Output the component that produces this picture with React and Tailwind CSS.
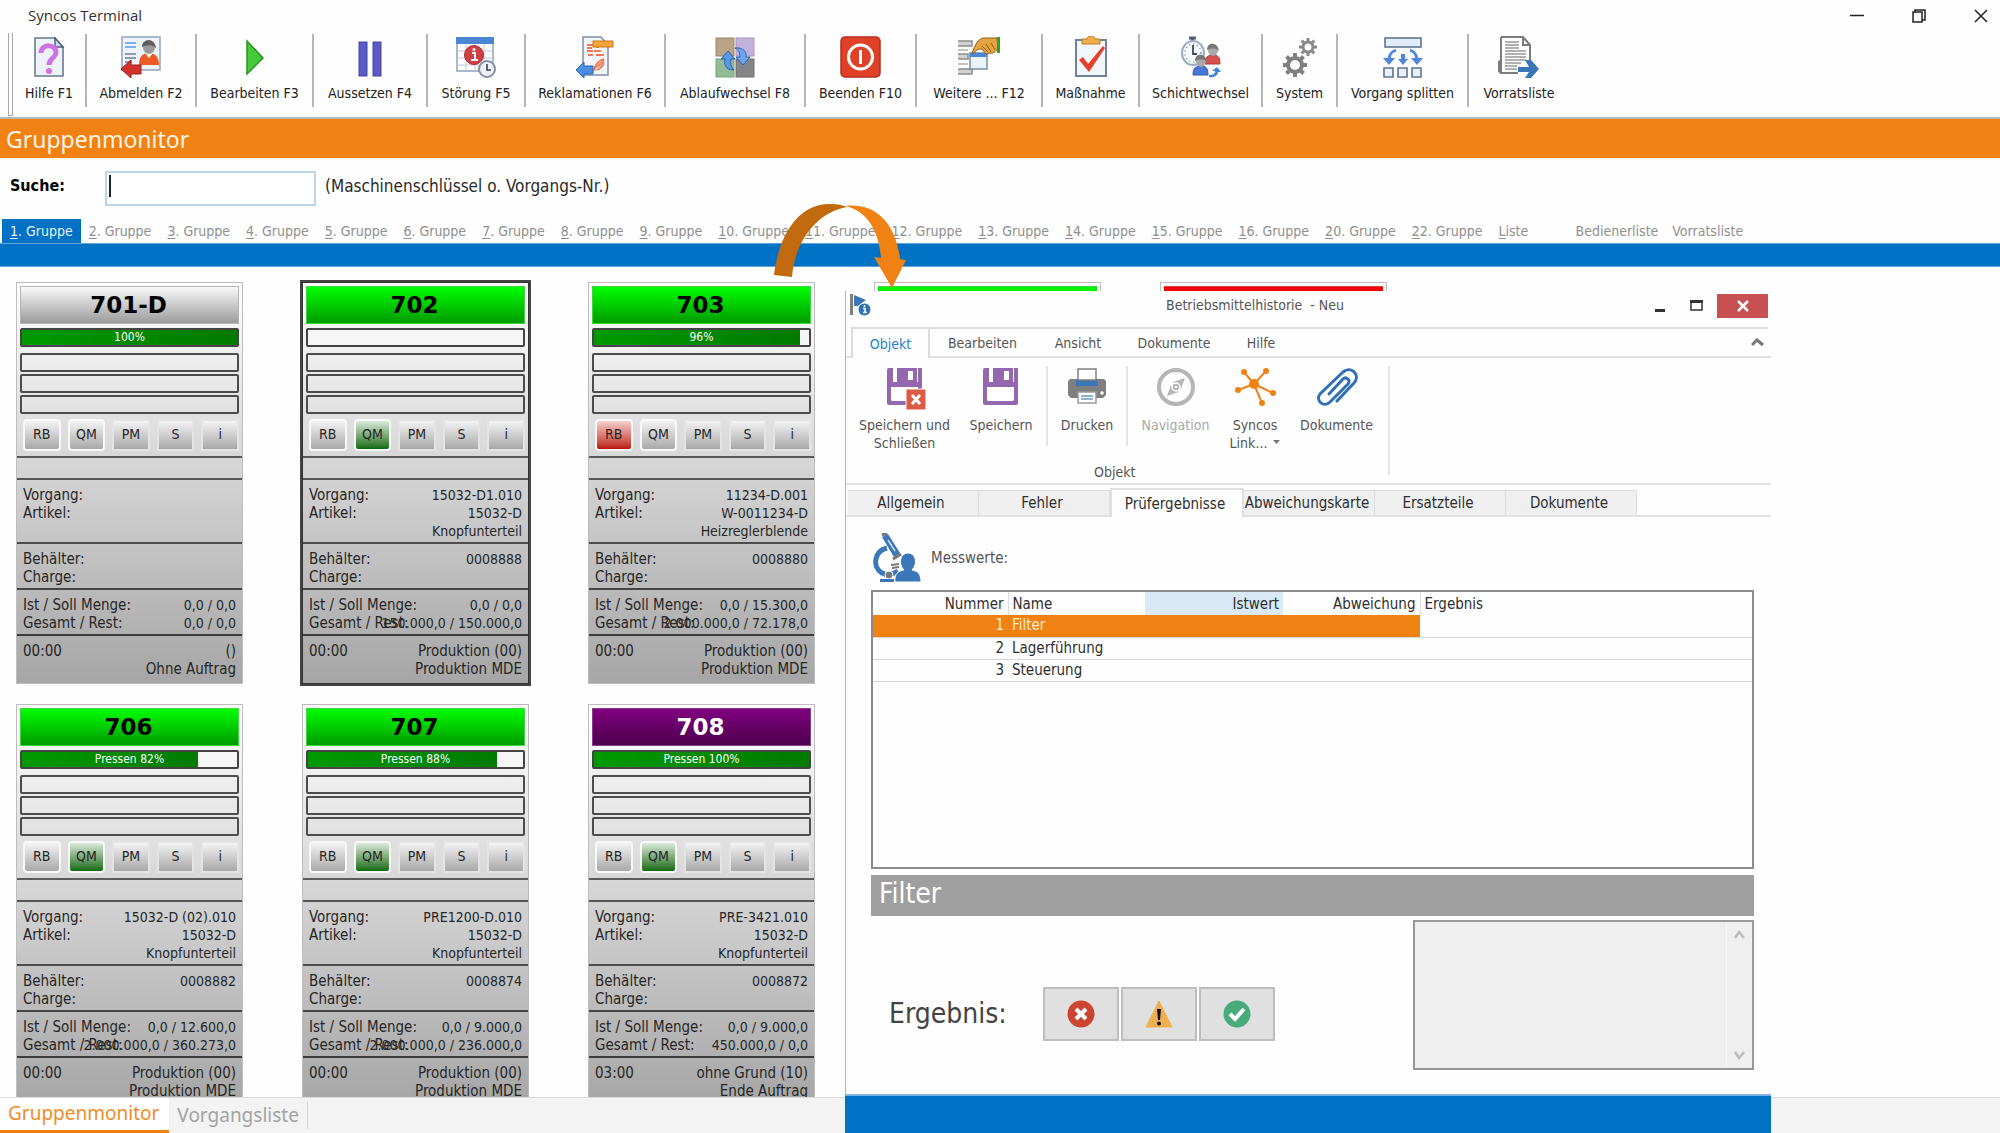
import React from "react";

/* ---------- toolbar icons ---------- */

const svg = { width: 42, height: 42, viewBox: "0 0 42 42", fill: "none", "aria-hidden": true };

const HelpIcon = () => (
  <svg {...svg}>
    <path d="M7 2h20l8 9v29H7z" fill="#eef3fa" stroke="#6a7a90" strokeWidth="1.6" />
    <path d="M27 2v9h8z" fill="#c9d8ea" stroke="#4a5d78" strokeWidth="1.4" />
    <path d="M13 17c0-10 16-9 15 0-.5 5-7 5-7 12" stroke="#cf73e3" strokeWidth="5" />
    <circle cx="21" cy="35" r="3" fill="#cf73e3" />
  </svg>
);

const LogoutIcon = () => (
  <svg {...svg}>
    <rect x="2" y="1" width="38" height="33" fill="#edf3fa" stroke="#9aa9bd" strokeWidth="1.6" />
    <path d="M5 7h11M5 11h11" stroke="#7db0ea" strokeWidth="2" />
    <path d="M5 18h11M5 22h11M5 26h7" stroke="#6d7d95" strokeWidth="1.6" />
    <path d="M19 29c0-9 4-12 10-12s10 4 10 12z" fill="#ee5a24" />
    <path d="M25 17l4 5 4-5z" fill="#fff" />
    <ellipse cx="29" cy="11" rx="6" ry="7" fill="#9a9a9a" />
    <path d="M22 11c0-9 13-9 14 1-4-4-9-3-14-1z" fill="#5d5d5d" />
    <path d="M1 33l10-9v5h10v9H11v4z" fill="#d1322b" stroke="#9d211c" />
  </svg>
);

const PlayIcon = () => (
  <svg {...svg}>
    <path d="M13 5l16 17-16 16z" fill="#45c93b" stroke="#2a9424" strokeWidth="1.5" />
  </svg>
);

const PauseIcon = () => (
  <svg {...svg}>
    <rect x="10" y="6" width="8" height="34" fill="#5a5bc4" stroke="#4444a0" />
    <rect x="24" y="6" width="8" height="34" fill="#5a5bc4" stroke="#4444a0" />
  </svg>
);

const FaultIcon = () => (
  <svg {...svg}>
    <rect x="2" y="2" width="36" height="33" fill="#fff" stroke="#8da0ba" strokeWidth="1.5" />
    <path d="M2 15h36M2 22h36M2 29h36M11 8v27M20 8v27M29 8v27" stroke="#c0c8d4" />
    <rect x="1" y="1" width="38" height="7" fill="#4a86d4" />
    <circle cx="19" cy="19" r="9.500" fill="#cf3f43" stroke="#a82a2e" />
    <path d="M17 17h3v7m-4 0h7" stroke="#fff" strokeWidth="2" />
    <circle cx="19" cy="13.500" r="1.500" fill="#fff" />
    <circle cx="32" cy="33" r="8" fill="#eef2f8" stroke="#8390a5" strokeWidth="2" />
    <path d="M32 28v6h4" stroke="#33415a" strokeWidth="1.600" />
  </svg>
);

const ComplaintIcon = () => (
  <svg {...svg}>
    <path d="M9 1h18l7 8v30H9z" fill="#f2f6fb" stroke="#7d90aa" strokeWidth="1.500" />
    <path d="M13 9h6M13 12h5M13 15h6M20 15h7M14 19h5M22 19h8M22 11h3" stroke="#ef7a55" strokeWidth="2" />
    <path d="M20 35c1-6 9-4 10-12-6 1-10 6-10 12zm2-1c5 0 8-5 8-8" fill="#f39a7b" stroke="#e5603a" />
    <rect x="19" y="5" width="20" height="6" fill="#f5a33b" stroke="#c87a18" />
    <path d="M2 34l8-8v4h9v8h-9v4z" fill="#4b8fe2" stroke="#2a65b5" />
  </svg>
);

const FlowIcon = () => (
  <svg {...svg}>
    <rect x="2" y="2" width="18" height="18" fill="#b9a488" stroke="#9a876c" />
    <rect x="22" y="2" width="18" height="18" fill="#c3b3dc" stroke="#a594c2" />
    <rect x="2" y="23" width="18" height="18" fill="#94bb98" stroke="#7aa27e" />
    <rect x="22" y="23" width="18" height="18" fill="#858585" stroke="#707070" />
    <path d="M20 34c-9 0-10-6-9-11H7l7-8 7 8h-4c-1 5 0 8 3 11z" fill="#5b98e6" stroke="#2a63ad" />
    <path d="M21 12c9-1 12 5 11 9h4l-7 8-7-8h4c0-4-1-7-5-9z" fill="#6ea6ee" stroke="#2a63ad" />
  </svg>
);

const PowerIcon = () => (
  <svg {...svg}>
    <rect x="1" y="1" width="39" height="40" rx="4" fill="#df4128" stroke="#b92f1b" strokeWidth="1.500" />
    <circle cx="20.500" cy="21" r="12" stroke="#fff" strokeWidth="3" />
    <path d="M20.500 14v14" stroke="#fff" strokeWidth="3" />
  </svg>
);

const MoreIcon = () => (
  <svg {...svg}>
    <path d="M0 5h14v5H0M0 18h10v5H0M0 33h14v5H0" fill="#d2d2d2" stroke="#8d8d8d" strokeWidth="1.500" />
    <path d="M0 14h10M0 28h10" stroke="#c4c4c4" strokeWidth="2" />
    <rect x="12" y="17" width="17" height="16" fill="#eaf2fc" stroke="#7a8ba4" strokeWidth="1.500" />
    <rect x="12" y="17" width="17" height="4" fill="#4a86d4" />
    <path d="M14 17c3-8 6-14 11-15h14l1 10c-2 3-4 6-8 5-3 2-5 1-7-3-3-2-5-1-9 3z" fill="#e3a440" stroke="#8f6015" />
    <path d="M24 10l6 6M28 8l5 8M33 7l4 7" stroke="#8f6015" />
    <path d="M40.500 1v16" stroke="#2ba32b" strokeWidth="3" />
  </svg>
);

const MeasureIcon = () => (
  <svg {...svg}>
    <rect x="6" y="4" width="30" height="36" fill="#f3f6fb" stroke="#71829c" strokeWidth="2" />
    <path d="M12 3h5c0-4 8-4 8 0h5v5H12z" fill="#efae4c" stroke="#be7d1e" />
    <path d="M9 24l4-3 5 7L33 10l2 2-16 24z" fill="#e5402b" />
  </svg>
);

const ShiftIcon = () => (
  <svg {...svg}>
    <path d="M9 2h7M12.500 2v5" stroke="#4f6077" strokeWidth="3" />
    <ellipse cx="13" cy="17" rx="11" ry="12" fill="#f7fafd" stroke="#9dadc1" strokeWidth="2" />
    <ellipse cx="13" cy="17" rx="8" ry="9" stroke="#7b8ca3" strokeWidth="1.500" strokeDasharray="1 3" />
    <path d="M13 9v9h4" stroke="#3a4a62" strokeWidth="1.800" />
    <path d="M25 28c0-7 3-9 8-9s7 2 7 9z" fill="#d8504b" stroke="#b23934" />
    <ellipse cx="33" cy="14" rx="5" ry="6" fill="#a8a8a8" />
    <path d="M27 14c0-9 11-8 12 1-3-3-8-3-12-1z" fill="#777" />
    <path d="M13 39c0-7 3-9 8-9s7 2 7 9z" fill="#4a76d4" stroke="#2f57b0" />
    <ellipse cx="21" cy="25" rx="5" ry="6" fill="#a8a8a8" />
    <path d="M15 25c0-9 11-8 12 1-3-3-8-3-12-1z" fill="#777" />
    <path d="M29 39c4 0 6-1 6-4h-3l5-4 4 5h-3c0 4-5 6-9 5z" fill="#3f87de" />
  </svg>
);

const Gear = ({ cx, cy, r, w, color, n = 8 }) => (
  <g transform={`translate(${cx} ${cy})`} stroke={color}>
    <circle r={r} strokeWidth={w} />
    {Array.from({ length: n }, (_, i) => (
      <path key={i} transform={`rotate(${(i * 360) / n})`} d={`M0 ${-r}v${-w - 1}`} strokeWidth={w} />
    ))}
  </g>
);

const SystemIcon = () => (
  <svg {...svg}>
    <Gear cx={16} cy={29} r={7} w={4} color="#7f7f7f" />
    <Gear cx={29} cy={11} r={5} w={3} color="#8a8a8a" />
  </svg>
);

const SplitIcon = () => (
  <svg {...svg}>
    <rect x="3" y="2" width="36" height="9" fill="#e3edf9" stroke="#607590" strokeWidth="1.600" />
    <path d="M14 13c-5 1-8 5-8 9H1l6 7 6-7H9c0-3 2-6 5-6zM28 13c5 1 8 5 8 9h5l-6 7-6-7h4c0-3-2-6-5-6z" fill="#4f86dc" />
    <path d="M19 18h4v5h3l-5 6-5-6h3z" fill="#4f86dc" />
    <path d="M2 32h9v9H2zM16 32h9v9h-9zM30 32h9v9h-9z" fill="#e9f0f8" stroke="#607590" strokeWidth="1.600" />
  </svg>
);

const StockIcon = () => (
  <svg {...svg}>
    <path d="M3 1h22l7 8v18M3 1v36h17M3 24l-2 2v9l2 2" stroke="#7c7c7c" strokeWidth="2" />
    <path d="M25 1v8h7" stroke="#7c7c7c" strokeWidth="2" />
    <path d="M7 6h14M7 9h14M7 12h14M7 15h21M7 18h21M7 21h21M7 24h21M7 27h16M7 30h12M7 33h12" stroke="#999" strokeWidth="1.500" />
    <path d="M20 31h11l-4-7h6l8 9-8 9h-6l4-6H20z" fill="#3b76b8" />
  </svg>
);

/* ---------- dialog icons ---------- */

const FlagInfoIcon = () => (
  <svg width="22" height="22" viewBox="0 0 22 22" aria-hidden="true">
    <path d="M0 0h3v21H0z" fill="#7f7f7f" />
    <path d="M4 1l12 5-8 6H4z" fill="#3b76b8" />
    <circle cx="14.500" cy="15.500" r="6.500" fill="#2f6fb5" stroke="#fff" />
    <path d="M13 14.500h2v4m-2 0h4" stroke="#fff" strokeWidth="1.500" fill="none" />
    <circle cx="14.500" cy="12" r="1" fill="#fff" />
  </svg>
);

const SaveIcon = ({ close }) => (
  <svg width="42" height="42" viewBox="0 0 42 42" aria-hidden="true">
    <path d="M5 0h28a2 2 0 012 0h3v35a2 2 0 01-2 2H5a2 2 0 01-2-2V2a2 2 0 012-2z" fill="#9468ae" />
    <path d="M9 0h4v14H9zM33 0h1v14h-1z" fill="#fff" />
    <rect x="24" y="3" width="5" height="9" fill="#fff" />
    <path d="M7 19h27v13a2 2 0 01-2 1H9a2 2 0 01-2-1z" fill="#fff" />
    {close && (
      <g>
        <path d="M22 21h20v21H22z" fill="#dd5a45" stroke="#fff" />
        <path d="M28 27l8 9m0-9l-8 9" stroke="#fff" strokeWidth="3" />
      </g>
    )}
  </svg>
);

const PrintIcon = () => (
  <svg width="42" height="42" viewBox="0 0 42 42" aria-hidden="true">
    <path d="M4 11h34l2 2v14l-3 3H5l-3-3V13z" fill="#7f7f7f" />
    <path d="M10 11h22v7H10z" fill="#3b76b8" />
    <path d="M12 1h18v11H12z" fill="#fff" stroke="#7f7f7f" strokeWidth="1.500" />
    <path d="M12 24h18v11H12z" fill="#fff" stroke="#9a9a9a" strokeWidth="1.500" />
    <path d="M15 28h12M15 31h12" stroke="#6a9bd0" strokeWidth="1.500" />
    <circle cx="36" cy="25" r="1.800" fill="#fff" />
  </svg>
);

const CompassIcon = () => (
  <svg width="42" height="42" viewBox="0 0 42 42" fill="none" aria-hidden="true">
    <circle cx="21" cy="19" r="17" stroke="#b5b5b5" strokeWidth="4" />
    <path d="M12 28l4-11 8 7zM30 10l-4 11-8-7z" fill="#b5b5b5" />
    <circle cx="21" cy="19" r="4" fill="#b5b5b5" stroke="#fff" strokeWidth="1.500" />
    <circle cx="21" cy="19" r="1.300" fill="#fff" />
  </svg>
);

const LinkHubIcon = () => (
  <svg width="42" height="42" viewBox="0 0 42 42" stroke="#f08214" strokeWidth="2" fill="#f08214" aria-hidden="true">
    <path d="M20 16L10 4M20 16L32 3M20 16L4 22M20 16l19 9M20 16l8 19" />
    <circle cx="20" cy="16" r="4" />
    <circle cx="10" cy="4" r="2" />
    <circle cx="32" cy="3" r="2" />
    <circle cx="4" cy="22" r="2" />
    <circle cx="39" cy="25" r="2" />
    <circle cx="28" cy="35" r="2" />
  </svg>
);

const ClipIcon = () => (
  <svg width="42" height="42" viewBox="0 0 42 42" fill="none" stroke="#2f6fb5" strokeWidth="3" strokeLinecap="round" aria-hidden="true">
    <path d="M21 33l17-18c7-8-3-18-11-11L4 26c-5 7 4 14 10 8l18-18c3-4-2-8-5-5L13 26" />
  </svg>
);

const MicroscopeIcon = () => (
  <svg width="48" height="50" viewBox="0 0 48 50" fill="none" aria-hidden="true">
    <path d="M9 4l6-3 12 19-6 4z" fill="#3b76b8" />
    <path d="M15 7l7 11" stroke="#cfe0f2" strokeWidth="1.500" />
    <path d="M9 2l5-2" stroke="#777" strokeWidth="3" />
    <path d="M20 26l8-5" stroke="#777" strokeWidth="3" />
    <path d="M14 15C1 18-1 34 9 40c6 3 12 1 16-2" stroke="#3b76b8" strokeWidth="5" />
    <path d="M18 32l8-1M19 35l7-1" stroke="#777" strokeWidth="2" />
    <circle cx="16" cy="42" r="4" fill="#777" stroke="#fff" />
    <path d="M7 46h14v3H7z" fill="#3b76b8" />
    <path d="M22 49c-1-8 3-11 9-12-6-6-4-17 4-17s10 11 4 17c6 1 9 4 9 12z" fill="#3b76b8" stroke="#fff" />
  </svg>
);

/* ---------- data ---------- */

const TOOLS = [
  ["Hilfe F1", HelpIcon, "w-[74px]"],
  ["Abmelden F2", LogoutIcon, "w-[110px]"],
  ["Bearbeiten F3", PlayIcon, "w-[117px]"],
  ["Aussetzen F4", PauseIcon, "w-[114px]"],
  ["Störung F5", FaultIcon, "w-[98px]"],
  ["Reklamationen F6", ComplaintIcon, "w-[140px]"],
  ["Ablaufwechsel F8", FlowIcon, "w-[140px]"],
  ["Beenden F10", PowerIcon, "w-[111px]"],
  ["Weitere ... F12", MoreIcon, "w-[126px]"],
  ["Maßnahme", MeasureIcon, "w-[97px]"],
  ["Schichtwechsel", ShiftIcon, "w-[123px]"],
  ["System", SystemIcon, "w-[75px]"],
  ["Vorgang splitten", SplitIcon, "w-[131px]"],
  ["Vorratsliste", StockIcon, "w-[100px]"],
];

const GROUPS = ["1", "2", "3", "4", "5", "6", "7", "8", "9", "10", "11", "12", "13", "14", "15", "16", "20", "22"];

const GREEN = "bg-linear-to-b from-[#00ff00] to-[#009c00] text-black border-[#3fd63f]";
const SILVER = "bg-linear-to-b from-[#fafafa] to-[#9c9c9c] text-black border-[#b5b5b5]";
const PURPLE = "bg-linear-to-b from-[#800080] to-[#4d004d] text-white border-[#8a3a8a]";

const ROWS = [
  [
    { id: "701-D", head: SILVER, pct: 100, text: "100%", vorgang: "", artikel: "", name: "", behaelter: "", ist: "0,0 / 0,0", rest: "0,0 / 0,0", zeit: "00:00", s1: "()", s2: "Ohne Auftrag" },
    { id: "702", head: GREEN, pct: 0, text: "", qm: true, selected: true, vorgang: "15032-D1.010", artikel: "15032-D", name: "Knopfunterteil", behaelter: "0008888", ist: "0,0 / 0,0", rest: "150.000,0 / 150.000,0", zeit: "00:00", s1: "Produktion (00)", s2: "Produktion MDE" },
    { id: "703", head: GREEN, pct: 96, text: "96%", rb: true, vorgang: "11234-D.001", artikel: "W-0011234-D", name: "Heizreglerblende", behaelter: "0008880", ist: "0,0 / 15.300,0", rest: "2.000.000,0 / 72.178,0", zeit: "00:00", s1: "Produktion (00)", s2: "Produktion MDE" },
  ],
  [
    { id: "706", head: GREEN, pct: 82, text: "Pressen 82%", qm: true, vorgang: "15032-D (02).010", artikel: "15032-D", name: "Knopfunterteil", behaelter: "0008882", ist: "0,0 / 12.600,0", rest: "2.000.000,0 / 360.273,0", zeit: "00:00", s1: "Produktion (00)", s2: "Produktion MDE" },
    { id: "707", head: GREEN, pct: 88, text: "Pressen 88%", qm: true, vorgang: "PRE1200-D.010", artikel: "15032-D", name: "Knopfunterteil", behaelter: "0008874", ist: "0,0 / 9.000,0", rest: "2.000.000,0 / 236.000,0", zeit: "00:00", s1: "Produktion (00)", s2: "Produktion MDE" },
    { id: "708", head: PURPLE, pct: 100, text: "Pressen 100%", qm: true, vorgang: "PRE-3421.010", artikel: "15032-D", name: "Knopfunterteil", behaelter: "0008872", ist: "0,0 / 9.000,0", rest: "450.000,0 / 0,0", zeit: "03:00", s1: "ohne Grund (10)", s2: "Ende Auftrag" },
  ],
];

/* ---------- machine cards ---------- */

function Line({ label = "", value = "", size = "text-sm" }) {
  return (
    <div className="grid h-[18px] items-center whitespace-nowrap">
      <span className="leading-[18px] [grid-area:1/1]">{label}</span>
      <span className={`justify-self-end [grid-area:1/1] ${size}`}>
        <span className="block leading-[18px]">{value}</span>
      </span>
    </div>
  );
}

function CardButton({ children, tone, framed }) {
  const color =
    tone === "green"
      ? "from-[#dcebdc] to-[#0b6b0b]"
      : tone === "red"
        ? "from-[#f3cfcf] to-[#b80c0c]"
        : "from-[#f4f4f4] to-[#a9a9a9]";
  return (
    <button
      type="button"
      className={`h-8 w-[38px] border-2 bg-linear-to-b pb-0.5 text-center text-sm ${color} ${framed ? "rounded-sm border-[#f8f8f8]" : "border-[#e4e4e4]"}`}
    >
      {children}
    </button>
  );
}

function MachineCard({ m }) {
  return (
    <article
      className={`h-[402px] w-[227px] shrink-0 border bg-linear-to-b from-white to-[#a6a6a6] text-[15px] text-[#262626] ${m.selected ? "border-[#333] ring-2 ring-[#444]" : "border-[#bdbdbd]"}`}
    >
      <div className="flex h-[173px] flex-col px-[3px] pt-[3px]">
        <h2 className={`flex h-[38px] items-center justify-center border pr-0.5 font-['DejaVu_Sans'] text-[23px] font-bold ${m.head}`}>{m.id}</h2>
        <div className="mt-1 grid h-[19px] overflow-hidden rounded-xs border-2 border-[#444] bg-[#f6f6f6]">
          <div className="bg-linear-to-r from-[#009a00] to-[#007a00] [grid-area:1/1]" style={{ width: `${m.pct}%` }} />
          <span className="self-center text-center text-xs leading-[15px] text-white [grid-area:1/1]">{m.text}</span>
        </div>
        <div className="mt-[6px] flex flex-col gap-[2px]">
          <div className="h-[19px] rounded-xs border-2 border-[#4c4c4c]" />
          <div className="h-[19px] rounded-xs border-2 border-[#4c4c4c]" />
          <div className="h-[19px] rounded-xs border-2 border-[#4c4c4c]" />
        </div>
        <div className="mt-[5px] flex gap-[7px] pl-[3px]">
          <CardButton framed tone={m.rb ? "red" : ""}>RB</CardButton>
          <CardButton framed tone={m.qm ? "green" : ""}>QM</CardButton>
          <CardButton>PM</CardButton>
          <CardButton>S</CardButton>
          <CardButton>i</CardButton>
        </div>
      </div>
      <div className="h-[22px] border-t-2 border-[#5a5a5a]" />
      <div className="h-16 border-t-2 border-[#555] px-1.5 pt-1.5">
        <Line label="Vorgang:" value={m.vorgang} />
        <Line label="Artikel:" value={m.artikel} />
        <Line value={m.name} />
      </div>
      <div className="h-[46px] border-t-2 border-[#4c4c4c] px-1.5 pt-1.5">
        <Line label="Behälter:" value={m.behaelter} />
        <Line label="Charge:" />
      </div>
      <div className="h-[46px] border-t-2 border-[#444] px-1.5 pt-1.5">
        <Line label="Ist / Soll Menge:" value={m.ist} />
        <Line label="Gesamt / Rest:" value={m.rest} />
      </div>
      <div className="h-[49px] border-t-2 border-[#3c3c3c] px-1.5 pt-1.5">
        <Line label={m.zeit} value={m.s1} size="text-[15px]" />
        <Line value={m.s2} size="text-[15px]" />
      </div>
    </article>
  );
}

const CardStub = ({ tone }) => (
  <div className="h-[42px] w-[227px] shrink-0 border border-[#bdbdbd] bg-white p-[3px]">
    <div className={`h-full border-t ${tone}`} />
  </div>
);

/* ---------- dialog ---------- */

function RibbonButton({ icon, width, disabled, children }) {
  return (
    <button
      type="button"
      disabled={disabled}
      className={`flex flex-col items-center pt-[10px] text-sm leading-[18px] ${width} ${disabled ? "text-[#a9a9a9]" : "text-[#555]"}`}
    >
      {icon}
      <span className="mt-1.5">{children}</span>
    </button>
  );
}

const PAGE_TABS = ["Allgemein", "Fehler", "Prüfergebnisse", "Abweichungskarte", "Ersatzteile", "Dokumente"];

const MEASUREMENTS = [
  [1, "Filter"],
  [2, "Lagerführung"],
  [3, "Steuerung"],
];

function HistoryDialog() {
  return (
    <section
      role="dialog"
      aria-label="Betriebsmittelhistorie"
      className="absolute top-6 bottom-0 left-[845px] flex w-[926px] flex-col bg-[#fefefe] text-sm text-[#555]"
    >
      <div className="flex grow flex-col border-l border-[#8fb9e0]">
        <header className="flex h-[36px] items-start pt-[3px] pr-[3px] pl-1">
          <FlagInfoIcon />
          <h2 className="grow pr-1 text-center leading-[22px] whitespace-pre">Betriebsmittelhistorie  - Neu</h2>
          <button type="button" aria-label="Minimieren" className="flex h-6 w-9 items-center justify-center">
            <svg width="12" height="14" aria-hidden="true"><path d="M1 10h10v3H1z" fill="#333" /></svg>
          </button>
          <button type="button" aria-label="Maximieren" className="flex h-6 w-9 items-center justify-center">
            <svg width="13" height="14" aria-hidden="true"><path d="M1 2h11v9H1z" fill="none" stroke="#333" strokeWidth="1.500" /><path d="M0 1h13v3H0z" fill="#333" /></svg>
          </button>
          <button type="button" aria-label="Schließen" className="ml-[3px] flex h-6 w-[51px] items-center justify-center bg-[#c75050]">
            <svg width="12" height="12" aria-hidden="true"><path d="M1 1l10 10M11 1L1 11" stroke="#fff" strokeWidth="2.500" /></svg>
          </button>
        </header>

        <nav className="flex h-[31px] items-stretch border-b-2 border-[#e2e2e2]">
          <button type="button" className="-mb-0.5 ml-[5px] w-[79px] border-2 border-b-0 border-[#dcdcdc] bg-[#fefefe] text-[#1f7fd6]">Objekt</button>
          <div className="mr-[3px] flex grow items-stretch border-t-2 border-[#dcdcdc]">
            <button type="button" className="w-[105px]">Bearbeiten</button>
            <button type="button" className="w-[86px]">Ansicht</button>
            <button type="button" className="w-[106px]">Dokumente</button>
            <button type="button" className="w-[68px]">Hilfe</button>
            <button type="button" aria-label="Menüband minimieren" className="mr-1 ml-auto">
              <svg width="13" height="9" aria-hidden="true"><path d="M1 7l5-5 6 5" fill="none" stroke="#777" strokeWidth="3" /></svg>
            </button>
          </div>
        </nav>

        <div className="flex h-[127px] border-b-2 border-[#e2e2e2]">
          <div className="my-2 flex w-[544px] flex-col border-r-2 border-[#e4e4e4]">
            <div className="flex h-[101px] shrink-0 items-start pl-1">
              <RibbonButton width="-mt-2 w-[109px] px-2" icon={<SaveIcon close />}>Speichern und Schließen</RibbonButton>
              <RibbonButton width="-mt-2 mr-[3px] w-[84px]" icon={<SaveIcon />}>Speichern</RibbonButton>
              <div className="h-20 w-0.5 bg-[#e4e4e4]" />
              <RibbonButton width="-mt-2 w-[78px]" icon={<PrintIcon />}>Drucken</RibbonButton>
              <div className="h-20 w-0.5 bg-[#e4e4e4]" />
              <RibbonButton width="-mt-2 w-[95px]" disabled icon={<CompassIcon />}>Navigation</RibbonButton>
              <RibbonButton width="-mt-2 w-[64px]" icon={<LinkHubIcon />}>
                Syncos<br />Link... <svg className="mb-1 ml-0.5 inline" width="7" height="4" aria-hidden="true"><path d="M0 0h7L3.500 4z" fill="#777" /></svg>
              </RibbonButton>
              <RibbonButton width="-mt-2 w-[99px]" icon={<ClipIcon />}>Dokumente</RibbonButton>
            </div>
            <p className="-mt-px pl-[248px] leading-3">Objekt</p>
          </div>
        </div>

        <div className="flex h-8 items-end border-b-2 border-[#e2e2e2] pl-0.5 text-[15px] text-[#2e2e2e]">
          {PAGE_TABS.map((t) =>
            t === "Prüfergebnisse" ? (
              <button key={t} type="button" className="-mb-0.5 h-[29px] w-[134px] border-2 border-b-0 border-[#e0e0e0] bg-[#fefefe] pt-0.5 pr-1">{t}</button>
            ) : (
              <button key={t} type="button" className="h-[25px] w-[131px] border-t border-r border-[#dedede] bg-[#efefef] pt-0.5 pr-1 whitespace-nowrap">{t}</button>
            ),
          )}
        </div>

        <div className="flex grow flex-col pr-[17px] pl-[25px]">
          <div className="flex h-[73px] items-start pt-4 pl-0.5">
            <MicroscopeIcon />
            <span className="pt-[15px] pl-2.5 text-[15px] leading-[20px]">Messwerte:</span>
          </div>

          <div className="h-[279px] border-2 border-[#8c8c8c] text-[15px] text-[#2e2e2e]">
            <table className="w-full table-fixed border-collapse">
              <colgroup>
                <col className="w-[135px]" />
                <col className="w-[137px]" />
                <col className="w-[138px]" />
                <col className="w-[137px]" />
                <col />
              </colgroup>
              <thead>
                <tr className="h-[23px] leading-[20px]">
                  <th className="border-r border-[#ddd] pr-1 text-right font-normal">Nummer</th>
                  <th className="pl-1 text-left font-normal">Name</th>
                  <th className="bg-[#d9e9f6] pr-1 text-right font-normal">Istwert</th>
                  <th className="border-r border-[#ddd] pr-1 text-right font-normal">Abweichung</th>
                  <th className="pl-1 text-left font-normal">Ergebnis</th>
                </tr>
              </thead>
              <tbody>
                {MEASUREMENTS.map(([n, name], i) => {
                  const cell = i === 0 ? "bg-[#f08214] text-[#ffe9cf]" : "";
                  return (
                    <tr key={n} className="h-[22px] border-b border-[#d6d6d6] leading-[19px]">
                      <td className={`pr-1 text-right ${cell}`}>{n}</td>
                      <td className={`pl-1 ${cell}`}>{name}</td>
                      <td className={cell} />
                      <td className={cell} />
                      <td />
                    </tr>
                  );
                })}
              </tbody>
            </table>
          </div>

          <h3 className="mt-1.5 h-[41px] bg-[#9f9f9f] px-2 text-[28px] leading-[38px] text-white">Filter</h3>

          <div className="mt-1 flex items-start">
            <div className="flex grow items-center pt-[67px] pl-[18px]">
              <span className="w-[154px] text-[28px] text-[#444]">Ergebnis:</span>
              <div className="flex gap-0.5">
                <button type="button" aria-label="Nicht in Ordnung" className="flex h-[54px] w-[76px] items-center justify-center border-2 border-[#bdbdbd] bg-[#e0e0e0]">
                  <svg width="28" height="28" viewBox="0 0 28 28" aria-hidden="true"><circle cx="14" cy="14" r="13.500" fill="#cb4532" /><path d="M9 9l10 10M19 9L9 19" stroke="#fff" strokeWidth="4" /></svg>
                </button>
                <button type="button" aria-label="Warnung" className="flex h-[54px] w-[76px] items-center justify-center border-2 border-[#bdbdbd] bg-[#e0e0e0]">
                  <svg width="28" height="28" viewBox="0 0 28 28" aria-hidden="true"><path d="M14 1l13 26H1z" fill="#eeaf50" stroke="#eeaf50" strokeLinejoin="round" /><path d="M12 9h4l-1 11h-2z" fill="#111" /><circle cx="14" cy="23.500" r="2" fill="#111" /></svg>
                </button>
                <button type="button" aria-label="In Ordnung" className="flex h-[54px] w-[76px] items-center justify-center border-2 border-[#bdbdbd] bg-[#e0e0e0]">
                  <svg width="28" height="28" viewBox="0 0 28 28" aria-hidden="true"><circle cx="14" cy="14" r="13.500" fill="#48aa7d" /><path d="M7 14l5 5L21 9" fill="none" stroke="#fff" strokeWidth="4" /></svg>
                </button>
              </div>
            </div>
            <div className="flex h-[150px] w-[341px] border-2 border-[#999] bg-[#efefef]">
              <textarea aria-label="Bemerkung" className="grow resize-none bg-transparent outline-none" />
              <div className="flex w-[26px] flex-col items-center justify-between border-l border-[#f8f8f8] py-2">
                <svg width="11" height="9" aria-hidden="true"><path d="M1 8l4-6 5 6" fill="none" stroke="#bbb" strokeWidth="2.500" /></svg>
                <svg width="11" height="9" aria-hidden="true"><path d="M1 1l4 6 5-6" fill="none" stroke="#bbb" strokeWidth="2.500" /></svg>
              </div>
            </div>
          </div>
        </div>
      </div>
      <div className="h-[39px] border-t-2 border-[#7fb3df] bg-[#0072c6]" />
    </section>
  );
}

const CurvedArrow = () => (
  <svg className="pointer-events-none absolute -top-[67px] left-[770px]" width="140" height="90" viewBox="770 200 140 90" aria-hidden="true">
    <path d="M774 275C778 240 796 202 832 204C838 204 842 205 847 207C818 212 795 240 792 277Z" fill="#c26a10" />
    <path d="M845 206C876 202 896 224 900 259L906 260L892 288L874 257L881 258C879 232 868 211 845 206Z" fill="#f08214" />
  </svg>
);

/* ---------- page ---------- */

export default function App() {
  return (
    <div className="flex h-screen flex-col overflow-hidden bg-[#fefefe] font-['DejaVu_Sans_Condensed','Noto_Sans',sans-serif] text-sm text-[#2a2a2a]">
      <header className="flex h-[31px] shrink-0 items-center pr-3 pl-7">
        <h1 className="grow font-['Open_Sans',sans-serif] text-[15px] text-[#333]">Syncos Terminal</h1>
        <div className="flex gap-12">
          <button type="button" aria-label="Minimieren"><svg width="14" height="14" aria-hidden="true"><path d="M0 6.500h14" stroke="#222" strokeWidth="1.500" /></svg></button>
          <button type="button" aria-label="Wiederherstellen"><svg width="14" height="14" fill="none" stroke="#222" strokeWidth="1.500" aria-hidden="true"><path d="M1 3h9v10H1zM3 3V1h10v10h-3" /></svg></button>
          <button type="button" aria-label="Schließen"><svg width="14" height="14" aria-hidden="true"><path d="M1 1l12 12M13 1L1 13" stroke="#222" strokeWidth="1.500" /></svg></button>
        </div>
      </header>

      <div role="toolbar" className="flex h-[88px] shrink-0 border-b-2 border-[#b3b8bd] pt-0.5 pl-2">
        <div className="h-[83px] w-[5px] border border-t-0 border-[#a8a8a8]" />
        {TOOLS.map(([label, Icon, width], i) => (
          <button
            key={label}
            type="button"
            className={`mt-px flex h-[73px] shrink-0 flex-col items-center pt-0.5 whitespace-nowrap text-[#222] ${width} ${i < TOOLS.length - 1 ? "border-r-2 border-[#b5b5b5]" : ""}`}
          >
            <Icon />
            <span className="mt-1 leading-[22px]">{label}</span>
          </button>
        ))}
      </div>

      <div className="flex h-[39px] shrink-0 items-center bg-[#f08214] pt-0.5 pl-1.5 font-['Noto_Sans',sans-serif] text-[23px] text-[#fff3e6]">Gruppenmonitor</div>

      <form className="flex h-[61px] shrink-0 items-start pt-[13px] pl-2.5 text-[17px]">
        <label htmlFor="suche" className="w-[95px] text-base leading-[30px] font-bold text-black">Suche:</label>
        <div className="flex h-[35px] w-[211px] items-center border-2 border-[#bcd4ea] bg-white pb-1.5 pl-0.5">
          <span className="h-[22px] w-0.5 bg-[#222]" />
          <input id="suche" type="text" className="h-[22px] w-0 grow bg-transparent outline-none" />
        </div>
        <span className="pl-[9px] leading-[30px]">(Maschinenschlüssel o. Vorgangs-Nr.)</span>
      </form>

      <nav className="flex h-6 shrink-0 pl-0.5 whitespace-nowrap text-[#8f8f8f]">
        {GROUPS.map((g, i) => (
          <button key={g} type="button" className={`px-2 ${i === 0 ? "bg-[#0072c6] text-[#e6f1fb]" : ""}`}>
            <span className="underline underline-offset-2">{g[0]}</span>
            {g.slice(1)}. Gruppe
          </button>
        ))}
        <button type="button" className="w-[77px] pl-2 text-left"><span className="underline underline-offset-2">L</span>iste</button>
        <button type="button" className="px-2">Bedienerliste</button>
        <button type="button" className="px-1.5">Vorratsliste</button>
      </nav>
      <div className="h-6 shrink-0 border-y border-[#5fa5dc] bg-[#0072c6]" />

      <div className="relative flex min-h-0 grow flex-col">
        <main className="flex min-h-0 grow flex-col gap-5 overflow-hidden pt-[15px] pl-4">
          {ROWS.map((row, r) => (
            <div key={r} className="flex shrink-0 gap-[59px]">
              {row.map((m) => (
                <MachineCard key={m.id} m={m} />
              ))}
              {r === 0 && <CardStub tone="bg-[#00f000] border-[#3fd63f]" />}
              {r === 0 && <CardStub tone="bg-[#f00000] border-[#d63f3f]" />}
            </div>
          ))}
        </main>

        <footer className="flex h-9 shrink-0 items-stretch border-t border-[#dcdcdc] bg-[#f3f3f3] font-['Noto_Sans',sans-serif] text-[19px]">
          <button type="button" className="border-b-3 border-[#f08214] bg-white pr-2.5 pl-2 text-[#f08c28]">Gruppenmonitor</button>
          <button type="button" className="my-1 border-r border-[#cfcfcf] px-2 text-[#a3a3a3]">Vorgangsliste</button>
        </footer>

        <HistoryDialog />
        <CurvedArrow />
      </div>
    </div>
  );
}
